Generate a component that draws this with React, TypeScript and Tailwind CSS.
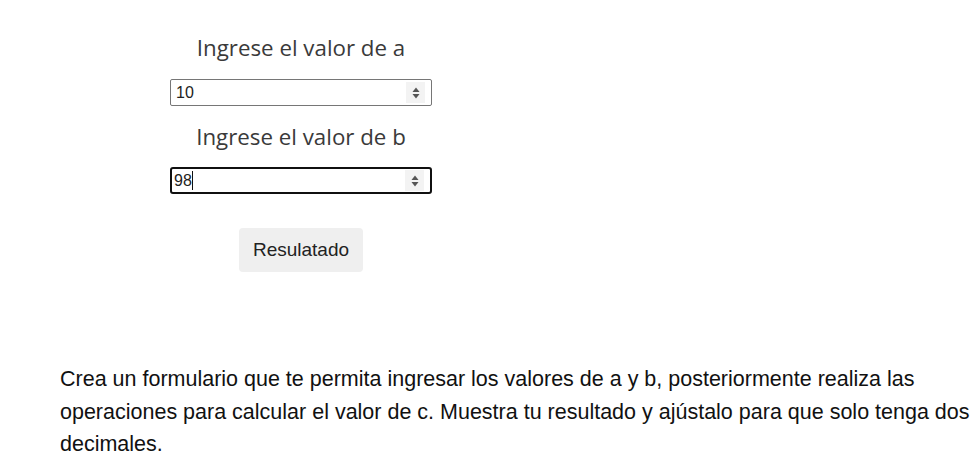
import { useState } from "react";

function Spinner() {
  return (
    <div className="flex items-center justify-center w-[19px] h-[21px] bg-[#f3f3f3] mr-[6px]">
      <svg width="8" height="12" viewBox="0 0 8 12">
        <path d="M4 0.5 L7.5 5 L0.5 5 Z" fill="#555" />
        <path d="M0.5 7 L7.5 7 L4 11.5 Z" fill="#555" />
      </svg>
    </div>
  );
}

export default function App() {
  const [a, setA] = useState("10");
  const [b, setB] = useState("98");

  return (
    <div className="w-[976px] h-[476px] bg-white overflow-hidden">
      {/* Form */}
      <div className="ml-[170px] w-[262px] pt-[34px] flex flex-col items-center font-['Open_Sans',sans-serif]">
        <label className="text-[22.3px] leading-[28px] text-[#3a3a3a]">
          Ingrese el valor de a
        </label>
        <div className="mt-[17px] w-full h-[27px] flex items-center border border-[#767676] rounded-[2px]">
          <input
            value={a}
            onChange={(e) => setA(e.target.value)}
            className="flex-1 min-w-0 pl-[5px] text-[16px] text-[#222] outline-none font-['Liberation_Sans',sans-serif]"
          />
          <Spinner />
        </div>
        <label className="mt-[17px] text-[22.3px] leading-[28px] text-[#3a3a3a]">
          Ingrese el valor de b
        </label>
        <div className="mt-[16px] w-full h-[27px] flex items-center border-2 border-[#101010] rounded-[3px]">
          <div className="flex-1 flex items-center">
            <input
              value={b}
              onChange={(e) => setB(e.target.value)}
              className="w-[20px] pl-[2px] text-[16px] text-[#222] outline-none font-['Liberation_Sans',sans-serif]"
            />
            <span className="w-px h-[19px] bg-[#111]" />
          </div>
          <Spinner />
        </div>
        <button
          type="button"
          className="mt-[34px] w-[124px] h-[44px] bg-[#efefef] rounded-[4px] text-[19px] text-[#222] font-['Liberation_Sans',sans-serif]"
        >
          Resulatado
        </button>
      </div>

      {/* Instructions */}
      <p className="mt-[91px] ml-[60px] w-[914px] text-[21.5px] leading-[32.5px] text-[#111] font-['Liberation_Sans',sans-serif]">
        Crea un formulario que te permita ingresar los valores de a y b,
        posteriormente realiza las operaciones para calcular el valor de c.
        Muestra tu resultado y ajústalo para que solo tenga dos decimales.
      </p>
    </div>
  );
}
